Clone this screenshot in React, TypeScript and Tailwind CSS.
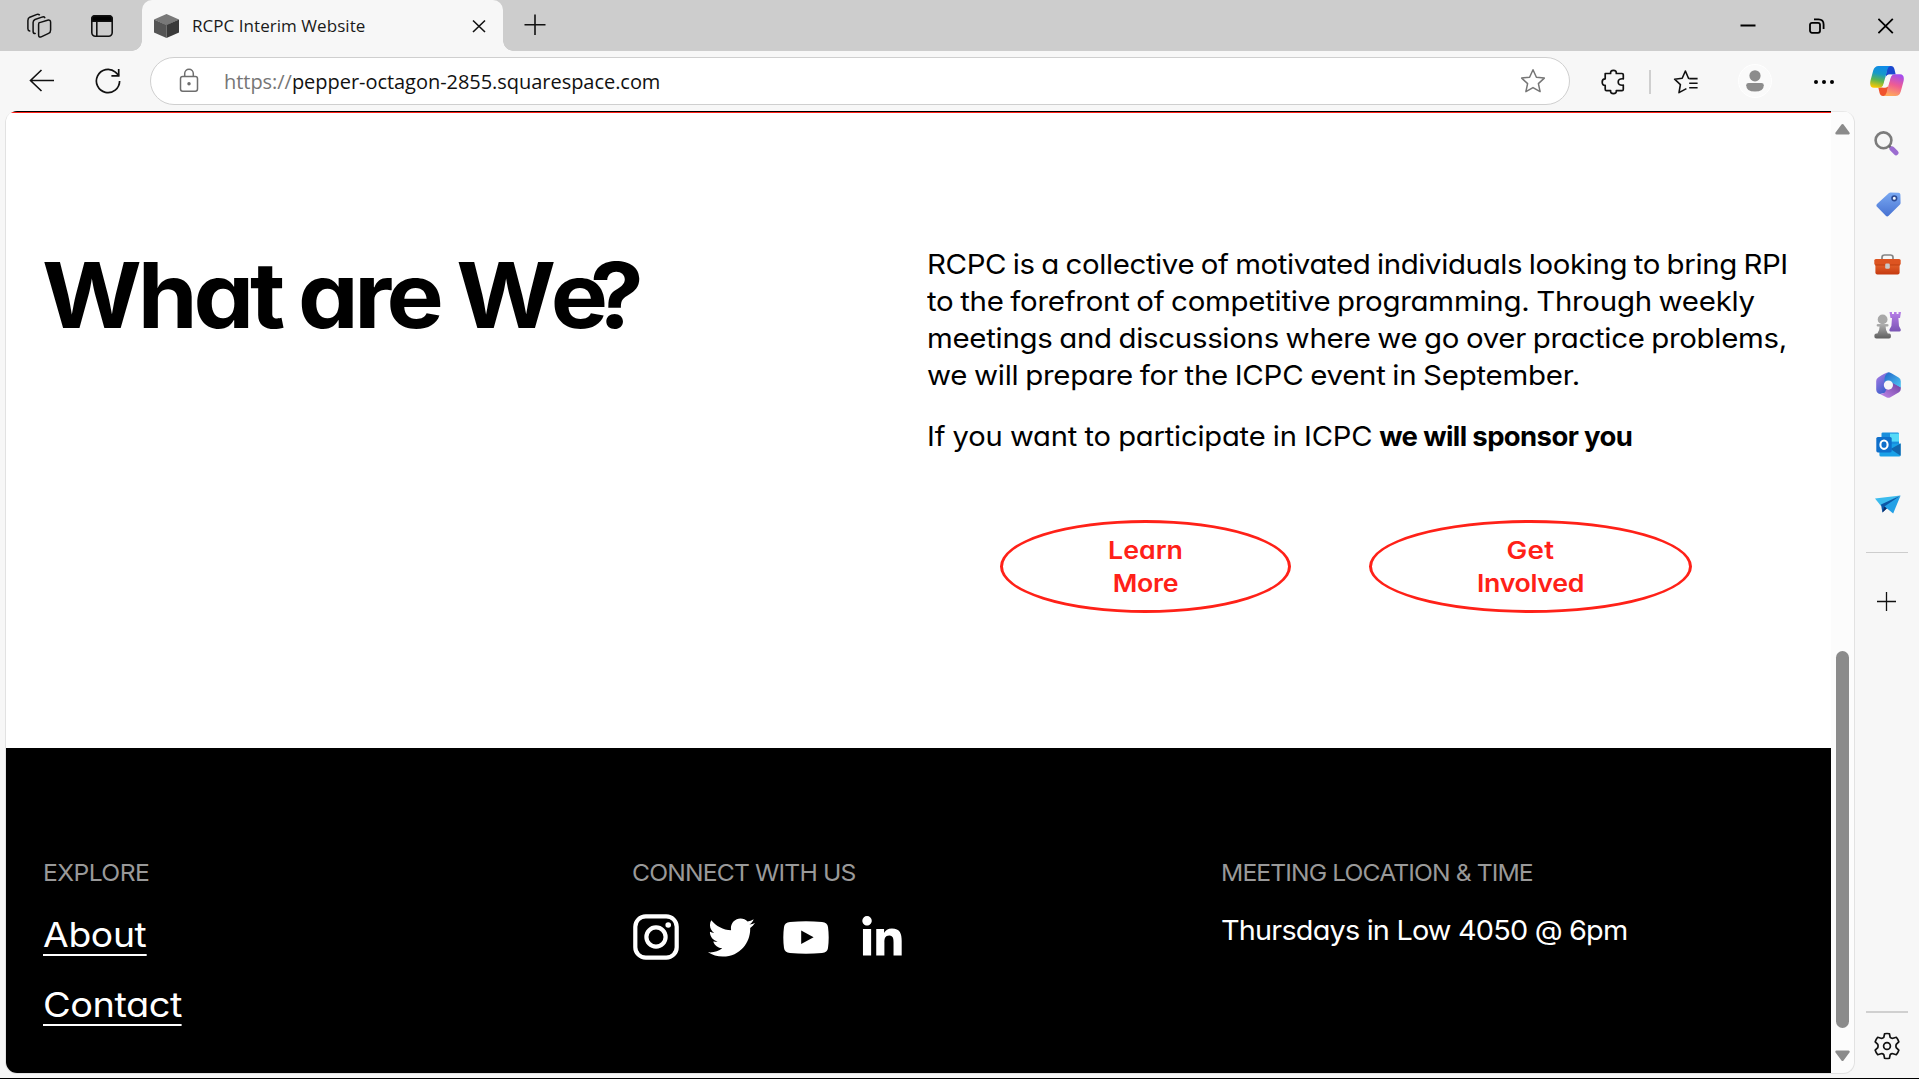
import React from "react";
import { FaTwitter, FaLinkedinIn } from "react-icons/fa";

function TabStrip() {
  return (
    <header className="flex h-[51px] bg-[#cdcdcd]">
      <div className="flex w-[142px] shrink-0 items-center rounded-br-[10px] pl-[26px]">
        <svg className="h-[26px] w-[26px]" viewBox="0 0 26 26" fill="none" stroke="#111" strokeWidth="1.5" strokeLinejoin="round" strokeLinecap="round">
          <path d="M13.6 9.6 L21.5 7.2 Q24.6 6.6 24.6 9.2 V17 Q24.6 19.6 22.6 20.4 L15.2 23.9 Q12.6 24.6 12.6 22 V11.5 Q12.6 9.8 13.6 9.6Z" />
          <path d="M9.2 20.6 Q7.1 20.6 7.1 18.5 V9.6 Q7.1 7.4 9 6.5 L16.6 3.9 Q18.2 3.5 18.8 4.6" />
          <path d="M3.7 18 Q1.9 17.6 1.9 15.7 V7.4 Q1.9 5.2 3.8 4.2 L11 1.4 Q12.4 1 13.4 1.8" />
        </svg>
        <svg className="ml-[38px] h-[24px] w-[24px]" viewBox="0 0 24 24" fill="none" stroke="#111" strokeWidth="1.6">
          <rect x="1.8" y="1.8" width="20.4" height="20.4" rx="3.6" />
          <path d="M1.8 7.2 V5 Q1.8 1.8 5 1.8 H19 Q22.2 1.8 22.2 5 V7.2Z" fill="#000" />
          <path d="M6.8 7 V22" />
        </svg>
      </div>
      <div className="relative flex h-[51px] w-[361px] shrink-0 items-center rounded-t-[10px] bg-[#f7f7f7] pl-[12px]">
        <span className="absolute bottom-0 -left-[10px] h-[10px] w-[10px] bg-[radial-gradient(circle_at_0_0,#cdcdcd_9.5px,#f7f7f7_10px)]" />
        <span className="absolute -right-[10px] bottom-0 h-[10px] w-[10px] bg-[radial-gradient(circle_at_100%_0,#cdcdcd_9.5px,#f7f7f7_10px)]" />
        <svg className="h-[24px] w-[25px]" viewBox="0 0 25 24">
          <path d="M12.5 0 L25 5.6 L12.5 11.2 L0 5.6Z" fill="#787878" />
          <path d="M0 5.6 L12.5 11 V24 L0 18.4Z" fill="#555" />
          <path d="M25 5.6 L12.5 11 V24 L25 18.4Z" fill="#3a3a3a" />
        </svg>
        <span className="ml-[13px] w-[280px] font-['Open_Sans',sans-serif] text-[17px] leading-[24px] tracking-[0.05px] whitespace-nowrap text-[#1a1a1a]">RCPC Interim Website</span>
        <svg className="mt-px h-[14px] w-[14px] shrink-0" viewBox="0 0 14 14" stroke="#111" strokeWidth="1.6">
          <path d="M1 1.5 L13 13 M13 1.5 L1 13" />
        </svg>
      </div>
      <svg className="mt-[14px] ml-[21px] h-[22px] w-[22px]" viewBox="0 0 22 22" stroke="#111" strokeWidth="1.6">
        <path d="M11 .5 V21 M.5 10.7 H21.5" />
      </svg>
      <div className="ml-auto flex items-center pr-[25px]">
        <svg className="h-[16px] w-[16px]" viewBox="0 0 16 16" stroke="#000" strokeWidth="2"><path d="M.5 7.5 H15.5" /></svg>
        <svg className="ml-[53px] h-[16px] w-[16px]" viewBox="0 0 16 16" fill="none" stroke="#000" strokeWidth="1.8">
          <rect x="1" y="4.8" width="10" height="10" rx="2" />
          <path d="M5 1.4 H9.5 Q14.6 1.4 14.6 6.5 V11" />
        </svg>
        <svg className="ml-[53px] h-[16px] w-[16px]" viewBox="0 0 16 16" stroke="#000" strokeWidth="1.8"><path d="M.4 .8 L14.8 15.2 M14.8 .8 L.4 15.2" /></svg>
      </div>
    </header>
  );
}

function Toolbar() {
  return (
    <div className="flex h-[60px] items-center bg-[#f7f7f7] pl-[29px]">
      <svg className="h-[24px] w-[26px]" viewBox="0 0 26 24" fill="none" stroke="#111" strokeWidth="1.6">
        <path d="M25 11.5 H1.5 M12.5 1 L1.5 11.5 L12.5 22" />
      </svg>
      <svg className="ml-[40px] h-[26px] w-[26px]" viewBox="0 0 26 26" fill="none" stroke="#111" strokeWidth="1.7">
        <path d="M24.6 13 A11.6 11.6 0 1 1 20.4 4.1 L24 7.6" />
        <path d="M23.7 1 V7.8 H16.4" />
      </svg>
      <div className="ml-[29px] flex h-[48px] w-[1420px] shrink-0 items-center rounded-full border border-[#cfcfcf] bg-white pl-[28px]">
        <svg className="mb-[2px] h-[25px] w-[20px]" viewBox="0 0 20 25" fill="none" stroke="#6e6e6e" strokeWidth="1.5">
          <rect x="1.5" y="8.5" width="17" height="14.8" rx="2.2" />
          <path d="M5.7 8.5 V5.6 A4.3 4.3 0 0 1 14.3 5.6 V8.5" />
          <circle cx="10" cy="15.7" r="1" fill="#6e6e6e" />
        </svg>
        <span className="mt-[2px] ml-[25px] w-[1296px] font-['Open_Sans',sans-serif] text-[20px] leading-[28px] tracking-[-0.04px] whitespace-nowrap text-[#111]">
          <span className="text-[#767676]">https://</span>pepper-octagon-2855.squarespace.com
        </span>
        <svg className="h-[26px] w-[26px] shrink-0" viewBox="0 0 26 26" fill="none" stroke="#767676" strokeWidth="1.5" strokeLinejoin="round">
          <path d="M13 1.8 L16.4 9.2 L24.3 10.1 L18.4 15.6 L20.1 23.6 L13 19.6 L5.9 23.6 L7.6 15.6 L1.7 10.1 L9.6 9.2Z" />
        </svg>
      </div>
      <svg className="mt-px ml-[31px] h-[26px] w-[25px]" viewBox="0 0 25 26" fill="none" stroke="#111" strokeWidth="1.7" strokeLinejoin="round">
        <path d="M4.2 4.5 H9.6 Q9.3 1.4 12.4 1.4 Q15.6 1.4 15.3 4.5 H21 Q22.3 4.5 22.3 5.8 V9.8 Q17.2 9.3 17.2 13 Q17.2 16.7 22.3 16.2 V20.3 Q22.3 21.7 21 21.7 H15.3 Q15.6 24.7 12.4 24.7 Q9.3 24.7 9.6 21.7 H5.5 Q4.2 21.7 4.2 20.3 V16.4 Q1.2 16.5 1.2 13.1 Q1.2 9.8 4.2 9.8Z" />
      </svg>
      <span className="mt-px ml-[23px] h-[24px] w-[2px] bg-[#cfcfcf]" />
      <svg className="mt-px ml-[22px] h-[26px] w-[27px]" viewBox="0 0 27 26" fill="none" stroke="#111" strokeWidth="1.6" strokeLinejoin="round">
        <path d="M16.2 9.6 L15.5 9.2 L12.4 2 L9.2 9.2 L1.6 10.2 L7.4 15.6 L6 23.6 L13.4 19.6" />
        <path d="M16.2 9.6 H24.6 M16.2 14.2 H24.6 M16.2 18.8 H24.6" />
      </svg>
      <div className="ml-[38px] flex h-[34px] w-[34px] items-center justify-center rounded-full border border-white bg-[#fafafa]">
        <svg className="h-[22px] w-[18px]" viewBox="0 0 18 22" fill="#8c8c8c">
          <circle cx="9" cy="5.8" r="5.6" />
          <path d="M2.6 13 H15.4 Q17.8 13 17.8 15.2 Q17.8 21.6 9 21.6 Q.2 21.6 .2 15.2 Q.2 13 2.6 13Z" />
        </svg>
      </div>
      <div className="mt-px ml-[42px] flex gap-[4px]">
        <span className="h-[4px] w-[4px] rounded-full bg-black" />
        <span className="h-[4px] w-[4px] rounded-full bg-black" />
        <span className="h-[4px] w-[4px] rounded-full bg-black" />
      </div>
      <svg className="ml-[36px] h-[32px] w-[34px]" viewBox="0 0 34 32">
        <defs>
          <linearGradient id="cpA" x1="0.5" y1="0" x2="0.3" y2="1"><stop offset="0" stopColor="#0f8be8" /><stop offset=".35" stopColor="#1699c9" /><stop offset=".65" stopColor="#5cb551" /><stop offset="1" stopColor="#ffc800" /></linearGradient>
          <linearGradient id="cpB" x1="0.7" y1="0" x2="0.4" y2="1"><stop offset="0" stopColor="#a34cf0" /><stop offset=".5" stopColor="#ef5c93" /><stop offset="1" stopColor="#ffa95c" /></linearGradient>
        </defs>
        <path d="M17 1 H21 Q23.6 1 24.4 4 L25.7 9.5 H19 Q16.5 9.6 15.6 13Z" fill="#1b48cf" />
        <path d="M17 31 H13 Q10.4 31 9.6 28 L8.3 22.5 H15 Q17.5 22.4 18.4 19Z" fill="#f0532d" />
        <path d="M8.5 1 H20.5 Q18.3 1.4 17.4 4.6 L13.5 19 Q12.5 22.8 9 22.8 H4 Q-.8 22.6 .4 16 L3.2 5.6 Q4.6 1 8.5 1Z" fill="url(#cpA)" />
        <path d="M25.5 31 H13.5 Q15.7 30.6 16.6 27.4 L20.5 13 Q21.5 9.2 25 9.2 H30 Q34.8 9.4 33.6 16 L30.8 26.4 Q29.4 31 25.5 31Z" fill="url(#cpB)" />
        <path d="M19.4 9.8 H21.8 Q20.7 11 20.2 13 L17.6 22 Q17 22.5 14.8 22.4 H12.4 Q13.3 21 13.8 19 L16.4 11.2 Q17.4 9.8 19.4 9.8Z" fill="#f7f7f7" />
      </svg>
    </div>
  );
}

function Cell({ children }: { children: React.ReactNode }) {
  return <div className="flex h-[60px] w-full shrink-0 items-center justify-center">{children}</div>;
}

function Sidebar() {
  return (
    <aside className="flex w-[64px] shrink-0 flex-col items-center bg-[#f7f7f7] pt-[3px]">
      <Cell>
        <svg className="mr-[1px] mb-[1px] h-[25px] w-[25px]" viewBox="0 0 25 25" fill="none">
          <circle cx="9.5" cy="9.3" r="7.9" stroke="#7c7c7c" strokeWidth="2.6" />
          <path d="M14.8 14.6 L18 17.8" stroke="#6b6b6b" strokeWidth="2.6" />
          <path d="M18 17.8 L22 21.8" stroke="#9b6cd0" strokeWidth="5" strokeLinecap="round" />
        </svg>
      </Cell>
      <Cell>
        <svg className="mt-px ml-[2px] h-[25px] w-[25px]" viewBox="0 0 25 25">
          <defs><linearGradient id="tg" x1="0" y1="0" x2="0" y2="1"><stop stopColor="#7aa9f2" /><stop offset="1" stopColor="#4772d2" /></linearGradient></defs>
          <path d="M13 .9 Q13.6 .4 14.5 .4 L22.5 .7 Q24.3 .9 24.4 2.6 L24.6 10.8 Q24.6 11.8 24 12.4 L12.6 23.8 Q11.2 25 9.8 23.8 L1 14.8 Q-.2 13.4 1 12Z" fill="url(#tg)" />
          <circle cx="18.3" cy="6.3" r="2.3" fill="#f4f8ff" stroke="#2c4a93" strokeWidth="1.6" />
        </svg>
      </Cell>
      <Cell>
        <svg className="mt-px ml-[1px] h-[21px] w-[27px]" viewBox="0 0 27 21">
          <defs><linearGradient id="tb" x1="0" y1="0" x2="0" y2="1"><stop stopColor="#e8662e" /><stop offset="1" stopColor="#c53a10" /></linearGradient></defs>
          <path d="M8 6 V3.4 Q8 1 10.4 1 H16.6 Q19 1 19 3.4 V6" fill="none" stroke="#858585" strokeWidth="1.7" />
          <rect x="1.4" y="9" width="24.2" height="11.4" rx="2" fill="url(#tb)" />
          <rect x=".3" y="5" width="26.4" height="6" rx="1.6" fill="#dd5421" />
          <path d="M1 11 H26" stroke="#b53a10" strokeWidth=".8" />
          <rect x="11.2" y="9.4" width="4.6" height="5.4" rx="1.3" fill="#c9c9c9" />
        </svg>
      </Cell>
      <Cell>
        <svg className="mt-px ml-[1px] h-[28px] w-[27px]" viewBox="0 0 27 28">
          <defs>
            <linearGradient id="rk" x1="0" y1="0" x2="0" y2="1"><stop stopColor="#b77ee8" /><stop offset="1" stopColor="#7a55b4" /></linearGradient>
            <linearGradient id="pn" x1="0" y1="0" x2="0" y2="1"><stop stopColor="#b0b0b0" /><stop offset="1" stopColor="#5e5e5e" /></linearGradient>
          </defs>
          <path d="M15.5 1 H18 V3 H20 V1 H22.6 V3 H24.5 V1 H27 L26 7 H24.4 L25 15 L26.8 18.6 Q27 20.5 25.6 20.5 H16.5 Q15 20.5 15.4 18.6 L17.4 15 L18 7 H16.5Z" fill="url(#rk)" />
          <circle cx="8.6" cy="8.4" r="4.9" fill="#a8a8a8" />
          <path d="M4 13 H13.2 Q14.6 13 14.6 14.3 Q14.6 15.6 13.2 15.6 H11.6 Q11.6 20 13.8 22.4 H15.4 Q17 22.6 17 24.9 Q17 27.5 15 27.5 H2.4 Q.3 27.5 .3 24.9 Q.3 22.6 2 22.4 H3.4 Q5.6 20 5.6 15.6 H4 Q2.6 15.6 2.6 14.3 Q2.6 13 4 13Z" fill="url(#pn)" />
        </svg>
      </Cell>
      <Cell>
        <svg className="mt-px ml-[2px] h-[26px] w-[25px]" viewBox="0 0 25 26">
          <defs>
            <linearGradient id="ma" x1="0" y1="0" x2="0.6" y2="1"><stop stopColor="#b27be6" /><stop offset="1" stopColor="#3a60cc" /></linearGradient>
            <linearGradient id="mb" x1="0" y1="0" x2="1" y2="1"><stop stopColor="#2264c8" /><stop offset="1" stopColor="#4cc7f3" /></linearGradient>
            <linearGradient id="mc" x1="1" y1="0" x2="0" y2="1"><stop stopColor="#6a3c9e" /><stop offset="1" stopColor="#c389ea" /></linearGradient>
          </defs>
          <path d="M12.5 .2 Q9.5 .5 2.2 5.4 Q.2 6.8 .2 9 V17.6 Q.4 21.6 4 22 Q8 22 12 19 L11 8 Q8.5 3 12.5 .2Z" fill="url(#ma)" />
          <path d="M24.8 12 V17 Q24.8 19 23 20.2 L14 25.4 Q12.4 26.2 10.8 25.4 L4 21.9 Q7 22 9 20.6 L12 13 L16.4 10.2 L24.8 15Z" fill="url(#mc)" />
          <path d="M12.5 .2 Q14 .1 22.6 5.6 Q24.8 7 24.8 9.2 V15.4 L16.6 11 L12 12 L8.5 10.5 V7 Q8.6 2.4 12.5 .2Z" fill="url(#mb)" />
          <circle cx="12.4" cy="13.1" r="4.6" fill="#f7f7f7" />
        </svg>
      </Cell>
      <Cell>
        <svg className="mt-px ml-[2px] h-[25px] w-[25px]" viewBox="0 0 25 25">
          <rect x="5.5" y=".4" width="17.5" height="14" rx="1.4" fill="#1a8fdd" />
          <rect x="14" y="1.6" width="9" height="8" fill="#54daf8" />
          <path d="M3.4 13 L24.6 11.6 V23 Q24.6 24.6 23 24.6 H5 Q3.4 24.6 3.4 23Z" fill="#1aa1e8" />
          <path d="M24.6 11.4 L14.5 17 L24.6 23.8Z" fill="#1266ad" />
          <rect x=".3" y="5" width="15.4" height="15.4" rx="1.6" fill="#0f6fca" />
          <ellipse cx="8" cy="12.7" rx="3.6" ry="4.2" fill="none" stroke="#fff" strokeWidth="2.1" />
        </svg>
      </Cell>
      <Cell>
        <svg className="mt-px ml-[1px] h-[19px] w-[26px]" viewBox="0 0 26 19">
          <path d="M0 3.4 L25.4 .4 L6 11Z" fill="#3bbcee" />
          <path d="M25.4 .4 L6 9.4 L7.4 17.6Z" fill="#0d57a6" />
          <path d="M25.6 .4 L18.2 18.4 L9.4 11.4Z" fill="#23a0e6" />
          <path d="M7.4 17.6 L9.4 11.4 L11.8 13.4Z" fill="#0b2c66" />
        </svg>
      </Cell>
      <div className="mt-[18px] h-px w-[42px] shrink-0 bg-[#cdcdcd]" />
      <svg className="mt-[39px] mr-[1px] h-[19px] w-[19px] shrink-0" viewBox="0 0 19 19" stroke="#111" strokeWidth="1.3"><path d="M9.5 0 V19 M0 9.5 H19" /></svg>
      <div className="mt-auto h-[2px] w-[42px] shrink-0 bg-[#d0d0d0]" />
      <svg className="mt-[19px] mr-[1px] mb-[18px] h-[28px] w-[26px] shrink-0" viewBox="0 0 26 28" fill="none" stroke="#111" strokeWidth="1.7" strokeLinejoin="round">
        <path d="M10.6 1.8 Q13 1.2 15.4 1.8 L16.2 5.4 Q17.4 6.6 19 6.2 L22.3 5.3 Q24 7.2 24.8 9.8 L22.2 12.4 Q21.6 14 22.2 15.6 L24.8 18.2 Q24 20.8 22.3 22.7 L19 21.8 Q17.4 21.4 16.2 22.6 L15.4 26.2 Q13 26.8 10.6 26.2 L9.8 22.6 Q8.6 21.4 7 21.8 L3.7 22.7 Q2 20.8 1.2 18.2 L3.8 15.6 Q4.4 14 3.8 12.4 L1.2 9.8 Q2 7.2 3.7 5.3 L7 6.2 Q8.6 6.6 9.8 5.4Z" />
        <circle cx="13" cy="14" r="3.4" />
      </svg>
    </aside>
  );
}

function About() {
  return (
    <section className="flex h-[635px] bg-white pt-[133px]">
      <h1 className="w-[885px] shrink-0 pl-[36px] text-[90.8px] leading-[98px] font-bold tracking-[-4.2px] whitespace-nowrap">
        <span className="inline-block origin-left scale-x-[1.06] [word-spacing:-1.5px]">
          <span className="tracking-[-3.9px]">What</span> are <span className="tracking-[-5px]">W</span><span className="tracking-[-17px]">e</span>?
        </span>
      </h1>
      <div className="pl-[36px] text-[27.5px] leading-[37px] whitespace-nowrap">
        <p>
          <span className="block origin-left scale-x-[1.07] tracking-[-0.36px] [word-spacing:-1.2px]">RCPC is a collective of motivated individuals looking to bring RPI</span>
          <span className="block origin-left scale-x-[1.07] tracking-[-0.24px] [word-spacing:-1.2px]">to the forefront of competitive programming. Through weekly</span>
          <span className="block origin-left scale-x-[1.07] tracking-[-0.27px] [word-spacing:-1.2px]">meetings and discussions where we go over practice problems,</span>
          <span className="block origin-left scale-x-[1.07] tracking-[-0.23px] [word-spacing:-1.2px]">we will prepare for the ICPC event in September.</span>
        </p>
        <p className="mt-[24px] flex">
          <span className="origin-left scale-x-[1.06] tracking-[-0.18px] [word-spacing:-0.6px]">If you want to participate in ICPC</span>
          <strong className="ml-[32px] font-bold tracking-[-0.62px]">we will sponsor you</strong>
        </p>
        <div className="mt-[65px] ml-[73px] flex gap-[78px] text-center text-[24.5px] leading-[33px] font-semibold text-[#ff2118]">
          <a className="flex h-[93px] w-[291px] flex-col justify-center rounded-[50%] border-[3px] border-[#ff2118]">
            <span className="scale-x-[1.09]">Learn</span>
            <span className="scale-x-[1.09] tracking-[-0.3px]">More</span>
          </a>
          <a className="flex h-[93px] w-[323px] flex-col justify-center rounded-[50%] border-[3px] border-[#ff2118]">
            <span className="scale-x-[1.13] tracking-[0.3px]">Get</span>
            <span className="scale-x-[1.09] tracking-[-0.3px]">Involved</span>
          </a>
        </div>
      </div>
    </section>
  );
}

function SiteFooter() {
  return (
    <footer className="flex flex-1 bg-black pt-[110px] pl-[37px] whitespace-nowrap text-white">
      <div className="w-[589px]">
        <h4 className="origin-left scale-x-[1.05] text-[23.5px] leading-[30px] tracking-[-0.55px] text-[#999]">EXPLORE</h4>
        <div className="mt-[27px] flex flex-col items-start gap-[28px] text-[34.5px] leading-[40px]">
          <a className="h-[41px] origin-left scale-x-[1.08] border-b-2 border-white tracking-[-0.3px]">About</a>
          <a className="mt-px h-[41px] origin-left scale-x-[1.1] border-b-2 border-white tracking-[-0.45px]">Contact</a>
        </div>
      </div>
      <div className="w-[589px]">
        <h4 className="origin-left scale-x-[1.05] text-[23.5px] leading-[30px] tracking-[-0.8px] text-[#999]">CONNECT WITH US</h4>
        <div className="mt-[25px] ml-px flex items-center">
          <svg className="h-[46px] w-[46px]" viewBox="0 0 46 46" fill="none" stroke="#fff" strokeWidth="4.2">
            <rect x="2.3" y="2.3" width="41.4" height="41.4" rx="10.5" />
            <circle cx="23" cy="23" r="9.6" />
            <circle cx="35.2" cy="11" r="2.8" fill="#fff" stroke="none" />
          </svg>
          <FaTwitter className="mt-px ml-[29px] h-[47px] w-[47px]" />
          <svg className="mt-px ml-[28px] h-[33px] w-[46px]" viewBox="0 0 46 33">
            <path d="M7 1 Q23 -.4 39 1 Q44.4 1.4 45 6 Q46.4 16.5 45 27 Q44.4 31.6 39 32 Q23 33.4 7 32 Q1.6 31.6 1 27 Q-.4 16.5 1 6 Q1.6 1.4 7 1Z" fill="#fff" />
            <path d="M18.2 9.6 L30.6 16.3 L18.2 23Z" fill="#000" />
          </svg>
          <FaLinkedinIn className="mt-[3px] ml-[32px] h-[45px] w-[42px]" />
        </div>
      </div>
      <div>
        <h4 className="origin-left scale-x-[1.05] text-[23.5px] leading-[30px] tracking-[-0.86px] text-[#999]">MEETING LOCATION &amp; TIME</h4>
        <p className="mt-[24px] origin-left scale-x-[1.05] text-[27.5px] leading-[37px] tracking-[-0.78px]">Thursdays in Low 4050 @ 6pm</p>
      </div>
    </footer>
  );
}

export default function App() {
  return (
    <div className="flex h-[1079px] w-[1919px] flex-col overflow-hidden border-b border-black bg-[#f7f7f7]">
      <TabStrip />
      <Toolbar />
      <div className="flex min-h-0 flex-1">
        <div className="mb-[4px] ml-[5px] flex w-[1850px] shrink-0 overflow-hidden rounded-[12px] border border-t-0 border-[#e2e2e2] bg-[#fcfcfc]">
          <main className="flex w-[1825px] shrink-0 flex-col font-['Inter',sans-serif] text-black [font-feature-settings:'cv11']">
            <div className="h-px bg-black" />
            <div className="h-px bg-[#ff2118]" />
            <About />
            <SiteFooter />
          </main>
          <div className="flex flex-1 flex-col items-center border-t border-[#e8e8e8]">
            <svg className="mt-[12px] h-[11px] w-[15px]" viewBox="0 0 15 11"><path d="M7.5 1.4 L13.4 9.2 H1.6Z" fill="#8b8b8b" stroke="#8b8b8b" strokeWidth="2.6" strokeLinejoin="round" /></svg>
            <div className="mt-[516px] h-[377px] w-[13px] rounded-full bg-[#8b8b8b]" />
            <svg className="mt-[22px] h-[11px] w-[15px]" viewBox="0 0 15 11"><path d="M7.5 9.6 L13.4 1.8 H1.6Z" fill="#8b8b8b" stroke="#8b8b8b" strokeWidth="2.6" strokeLinejoin="round" /></svg>
          </div>
        </div>
        <Sidebar />
      </div>
    </div>
  );
}
